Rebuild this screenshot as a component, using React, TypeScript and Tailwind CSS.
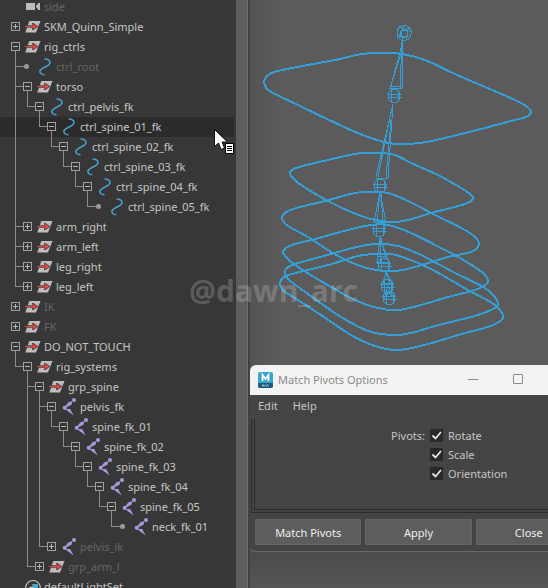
import { useState } from "react";
import type { ReactNode } from "react";

type Kind = "camera" | "group" | "curve" | "joint" | "set";

interface TreeNode {
  name: string;
  kind: Kind;
  muted?: boolean;
  selected?: boolean;
  closed?: boolean;
  children?: TreeNode[];
}

const chain = (kind: Kind, names: string[], selected?: string): TreeNode => ({
  name: names[0],
  kind,
  selected: names[0] === selected,
  children: names.length > 1 ? [chain(kind, names.slice(1), selected)] : undefined,
});

const scene: TreeNode[] = [
  { name: "side", kind: "camera", muted: true },
  { name: "SKM_Quinn_Simple", kind: "group", closed: true },
  {
    name: "rig_ctrls",
    kind: "group",
    children: [
      { name: "ctrl_root", kind: "curve", muted: true },
      {
        name: "torso",
        kind: "group",
        children: [
          chain(
            "curve",
            ["ctrl_pelvis_fk", "ctrl_spine_01_fk", "ctrl_spine_02_fk", "ctrl_spine_03_fk", "ctrl_spine_04_fk", "ctrl_spine_05_fk"],
            "ctrl_spine_01_fk",
          ),
        ],
      },
      { name: "arm_right", kind: "group", closed: true },
      { name: "arm_left", kind: "group", closed: true },
      { name: "leg_right", kind: "group", closed: true },
      { name: "leg_left", kind: "group", closed: true },
    ],
  },
  { name: "IK", kind: "group", muted: true, closed: true },
  { name: "FK", kind: "group", muted: true, closed: true },
  {
    name: "DO_NOT_TOUCH",
    kind: "group",
    children: [
      {
        name: "rig_systems",
        kind: "group",
        children: [
          {
            name: "grp_spine",
            kind: "group",
            children: [
              chain("joint", ["pelvis_fk", "spine_fk_01", "spine_fk_02", "spine_fk_03", "spine_fk_04", "spine_fk_05", "neck_fk_01"]),
              { name: "pelvis_ik", kind: "joint", muted: true, closed: true },
            ],
          },
          { name: "grp_arm_l", kind: "group", muted: true, closed: true },
        ],
      },
    ],
  },
  { name: "defaultLightSet", kind: "set" },
];

function NodeIcon({ kind }: { kind: Kind }) {
  return (
    <svg className="ml-[3px] size-4 shrink-0 overflow-visible" viewBox="0 0 16 16" aria-hidden="true">
      {kind === "camera" && <path d="M1 5h9v7H1zM11 8l2.500-3H15v7h-1.500L11 9z" fill="#bdbdbd" />}
      {kind === "group" && (
        <>
          <path d="M4.300 3h11.200l-4.500 11.500H.3z" fill="#bdbdbd" />
          <path d="M2 7.200h5V5l1.500 0L13.500 8.500 8.500 12H7V9.800H1z" fill="#4a4040" />
          <path d="M0 7.900h7.500V5.500L12.500 8.500 7.500 11.500V9.100H0z" fill="#dd4646" />
        </>
      )}
      {kind === "curve" && (
        <path
          d="M7.500 1C10.500 .8 13 2.300 13 4.700 12.800 8.200 4.500 9.500 3 12.800 2.300 14.800 4.300 16.600 7.500 16.800"
          fill="none"
          stroke="#4c9ecb"
          strokeWidth="1.600"
        />
      )}
      {kind === "joint" && (
        <g fill="#ab98dc">
          <circle cx="13" cy="2" r="2" />
          <circle cx="3.800" cy="9.800" r="2.100" />
          <path d="M4.300 8 7.500 4.200 11.500 3 10.500 6.700 6 9zM4.500 11.500 9 10.700 12.600 17.500z" />
        </g>
      )}
      {kind === "set" && (
        <>
          <circle cx="8" cy="9.800" r="7.300" fill="#373737" stroke="#c4c4c4" strokeWidth="1.200" />
          <path d="M7 6h6v7H9z" fill="#45aac6" />
          <circle cx="6.500" cy="11.500" r="3" fill="#c4c4c4" />
        </>
      )}
    </svg>
  );
}

function Guide({ elbow, more }: { elbow: boolean; more: boolean }) {
  return (
    <span className="flex h-5 w-3 shrink-0 flex-col pl-[5px]">
      <span className={`h-[10px] w-2 shrink-0 border-[#8c8c8c] ${elbow ? "border-b" : ""} ${elbow || more ? "border-l" : ""}`} />
      <span className={`h-[10px] w-2 shrink-0 border-[#8c8c8c] ${more ? "border-l" : ""}`} />
    </span>
  );
}

function TreeItem({ node, guides, last }: { node: TreeNode; guides: boolean[]; last: boolean }) {
  const [open, setOpen] = useState(!node.closed);
  const root = guides.length === 0;
  const branch = node.closed || !!node.children;
  const ancestors = guides.slice(1);
  const childGuides = [...guides, !last];
  return (
    <li>
      <div className={`flex h-5 items-start pl-[10px] ${node.selected ? "bg-[#2b2b2b]" : ""}`}>
        {ancestors.map((more, i) => (
          <Guide key={i} elbow={false} more={more} />
        ))}
        {!root && <Guide elbow more={!last} />}
        <span className="flex h-5 w-3 shrink-0 flex-col">
          {branch ? (
            <>
              <button
                type="button"
                aria-label={`${open ? "Collapse" : "Expand"} ${node.name}`}
                onClick={() => setOpen(!open)}
                className="mt-[5px] ml-px grid size-[9px] shrink-0 place-items-center border border-[#a0a0a0]"
              >
                <span className="col-start-1 row-start-1 h-px w-[5px] bg-[#b4b4b4]" />
                {(!open || !node.children) && <span className="col-start-1 row-start-1 h-[5px] w-px bg-[#b4b4b4]" />}
              </button>
              {open && node.children && <span className="ml-[5px] h-[6px] w-px bg-[#8c8c8c]" />}
            </>
          ) : (
            !root && (
              <span className="flex h-[19px] items-center">
                <span className="h-px w-[2px] bg-[#8c8c8c]" />
                <span className="size-[5px] rounded-full bg-[#9a9a9a]" />
              </span>
            )
          )}
        </span>
        <span className="flex h-[18px] items-center gap-[3px]">
          <NodeIcon kind={node.kind} />
          <span className={node.muted ? "text-[#666666]" : "text-[#c6c6c6]"}>{node.name}</span>
        </span>
      </div>
      {open && node.children && (
        <ul>
          {node.children.map((child, i) => (
            <TreeItem key={child.name} node={child} guides={childGuides} last={i === node.children!.length - 1} />
          ))}
        </ul>
      )}
    </li>
  );
}

type Point = [number, number];

const rings: Point[][] = [
  [[264, 82], [267, 76], [274, 72], [308, 65], [340, 59], [362, 54], [383, 53], [402, 54], [425, 60], [455, 74], [485, 87], [515, 100], [526, 106], [531, 112], [526, 117], [515, 120], [481, 129], [445, 138], [420, 143], [398, 144], [384, 142], [360, 134], [327, 119], [300, 106], [275, 94], [267, 89]],
  [[290, 174], [292, 170], [299, 167], [328, 160], [361, 153], [381, 153], [395, 155], [411, 163], [438, 175], [461, 188], [470, 194], [473, 199], [465, 204], [431, 213], [408, 220], [391, 222], [371, 219], [351, 212], [326, 200], [298, 183], [293, 178]],
  [[282, 217], [285, 213], [293, 209], [325, 201], [355, 193], [371, 192], [388, 193], [408, 201], [435, 215], [465, 230], [476, 238], [479, 244], [475, 250], [467, 253], [448, 257], [415, 267], [395, 271], [371, 269], [348, 261], [328, 250], [308, 237], [288, 226], [283, 221]],
  [[283, 252], [286, 248], [292, 245], [315, 239], [348, 230], [371, 225], [388, 225], [411, 233], [441, 248], [460, 258], [483, 273], [488, 281], [484, 286], [475, 290], [448, 297], [421, 305], [398, 310], [378, 308], [355, 300], [331, 287], [298, 267], [287, 258]],
  [[285, 272], [287, 268], [295, 264], [331, 254], [361, 246], [381, 244], [398, 246], [421, 255], [455, 273], [485, 288], [495, 297], [498, 304], [495, 308], [478, 315], [435, 326], [411, 333], [395, 335], [371, 332], [341, 317], [308, 294], [290, 281], [286, 277]],
  [[280, 284], [283, 278], [292, 274], [328, 265], [358, 256], [375, 254], [391, 254], [408, 259], [431, 269], [468, 290], [495, 305], [502, 313], [503, 318], [499, 322], [488, 327], [465, 333], [428, 344], [398, 350], [375, 346], [351, 335], [321, 315], [290, 295], [283, 290]],
];

/* Closed spline: each control handle is a third of its own segment, so tight corners stay round. */
function ringPath(pts: Point[]) {
  const n = pts.length;
  const at = (i: number) => pts[(i + n) % n];
  const dist = (p: Point, q: Point) => Math.hypot(q[0] - p[0], q[1] - p[1]);
  let d = `M${pts[0][0]} ${pts[0][1]}`;
  for (let i = 0; i < n; i++) {
    const [a, b, c, e] = [at(i - 1), at(i), at(i + 1), at(i + 2)];
    const k = dist(b, c) / 3;
    const u = k / dist(a, c);
    const v = k / dist(b, e);
    const handles = [b[0] + (c[0] - a[0]) * u, b[1] + (c[1] - a[1]) * u, c[0] - (e[0] - b[0]) * v, c[1] - (e[1] - b[1]) * v];
    d += `C${handles.map((h) => h.toFixed(1)).join(" ")} ${c[0]} ${c[1]}`;
  }
  return d + "Z";
}

const joints: Point[] = [[394, 96], [380, 186], [379, 230], [384, 265], [387, 286], [389, 298]];

const bones = [
  "M403 41 391 86M402 42 400 89M403 41 402 89M401 54 390 88H402M391 86H402",
  "M393 104 376 177M393 104 388 178M391 112 378 177M391 120 386 178M376 178H388",
  "M380 192 374 222H386L380 192M380 194 377 222M381 194 383 222",
  "M380 238 377 262H389L380 238M380 238 380 262M381 238 386 260M377 256H387",
  "M386 272 383 283H393L386 272M386 273 390 283",
  "M388 286 384 299H394L388 286M385 290 393 296M393 290 385 296",
];

function Viewport() {
  return (
    <svg className="block h-[365px] w-[298px] shrink-0" viewBox="250 0 298 365" role="img" aria-label="Rig viewport">
      <g fill="none" stroke="#349fd6" shapeRendering="crispEdges">
        {rings.map((r, i) => (
          <path key={i} d={ringPath(r)} strokeWidth="2" />
        ))}
        {bones.map((d) => (
          <path key={d} d={d} />
        ))}
        <path d="M399 27 405 25 410 28 412 32 409 39 403 41 398 38 397 32zM399 27 412 32M405 25 399 36H409M410 28 401 31 403 41" />
        <circle cx="404" cy="34" r="4" />
        {joints.map(([x, y]) => (
          <g key={y}>
            <ellipse cx={x} cy={y} rx="6" ry="7" />
            <path d={`M${x - 3} ${y - 6}V${y + 6}M${x + 4} ${y - 6}V${y + 6}M${x - 7} ${y - 2}H${x + 7}M${x - 6} ${y + 1}H${x + 8}`} />
          </g>
        ))}
      </g>
    </svg>
  );
}

function PivotOption({ label }: { label: string }) {
  return (
    <label className="flex h-[19px] items-center gap-[5px]">
      <span className="grid size-[13px]">
        <input
          type="checkbox"
          defaultChecked
          className="peer col-start-1 row-start-1 size-[13px] appearance-none rounded-[1px] bg-[#292929]"
        />
        <svg
          className="pointer-events-none invisible col-start-1 row-start-1 size-[13px] peer-checked:visible"
          viewBox="0 0 13 13"
          aria-hidden="true"
        >
          <path d="M2.500 6.500 5.500 9.500 11 3" fill="none" stroke="#e6e6e6" strokeWidth="1.800" />
        </svg>
      </span>
      {label}
    </label>
  );
}

function ActionButton({ children }: { children: ReactNode }) {
  return (
    <button type="button" className="h-[26px] flex-1 rounded-[1px] border border-[#646464] bg-[#5d5d5d] text-[#eeeeee]">
      {children}
    </button>
  );
}

function PivotDialog() {
  return (
    <section className="w-[337px] shrink-0 overflow-hidden rounded-md border-b border-[#686868] bg-[#444444] text-[#c6c6c6]">
      <header className="flex h-[30px] items-center bg-[#f3f3f3] text-[#8a8a8a]">
        <svg className="mr-[5px] ml-2 h-4 w-[15px]" viewBox="0 0 15 16" aria-hidden="true">
          <rect width="15" height="16" rx="2" fill="#39a5cc" />
          <path d="M0 11h15v3a2 2 0 0 1-2 2H2a2 2 0 0 1-2-2z" fill="#1c5c78" />
          <path d="M4.500 9V3L7.500 7 10.500 3V9" fill="none" stroke="#fff" strokeWidth="1.800" />
          <path d="M4 14.500l1-2 1 2M7 12.500v2M8.500 14.500l1-2 1 2" fill="none" stroke="#b9dce8" strokeWidth=".8" />
        </svg>
        <h2 className="flex-1 pb-[2px]">Match Pivots Options</h2>
        <div className="flex h-full pr-[2px] pb-[2px]">
          <button type="button" aria-label="Minimize" className="grid w-[45px] place-items-center">
            <span className="h-px w-[10px] bg-[#8a8a8a]" />
          </button>
          <button type="button" aria-label="Maximize" className="grid w-[45px] place-items-center">
            <span className="size-[10px] rounded-[1px] border border-[#8a8a8a]" />
          </button>
          <button type="button" aria-label="Close window" className="grid w-[45px] place-items-center">
            <svg className="size-[10px]" viewBox="0 0 10 10" aria-hidden="true">
              <path d="M0 0 10 10M10 0 0 10" stroke="#8a8a8a" />
            </svg>
          </button>
        </div>
      </header>
      <nav className="flex h-6 items-center gap-[15px] px-2 pb-[3px]">
        <button type="button">Edit</button>
        <button type="button">Help</button>
      </nav>
      <div className="ml-px border-b border-l border-[#2b2b2b] pb-[2px] pl-[2px]">
        <div className="flex h-[91px] border-b border-l border-[#2b2b2b] pt-[7px]">
          <span className="flex h-[19px] w-[175px] justify-end pr-[5px]">Pivots:</span>
          <div>
            <PivotOption label="Rotate" />
            <PivotOption label="Scale" />
            <PivotOption label="Orientation" />
          </div>
        </div>
      </div>
      <div className="flex gap-1 px-[5px] pt-[6px] pb-[6px]">
        <ActionButton>Match Pivots</ActionButton>
        <ActionButton>Apply</ActionButton>
        <ActionButton>Close</ActionButton>
      </div>
    </section>
  );
}

export default function App() {
  return (
    <main className="relative flex h-screen w-full overflow-hidden bg-[#373737] font-['Noto_Sans','Open_Sans',sans-serif] text-[11px] leading-[19px]">
      <div className="flex w-[250px] shrink-0 overflow-hidden border-r-2 border-[#414141]">
        <ul className="-mt-[3px] w-[234px]">
          {scene.map((node, i) => (
            <TreeItem key={node.name} node={node} guides={[]} last={i === scene.length - 1} />
          ))}
        </ul>
        <div className="ml-[2px] flex-1 border-r border-[#6e6e6e] bg-[#5d5d5d]" />
      </div>
      <div className="flex min-w-0 flex-1 flex-col overflow-hidden bg-linear-to-r from-[#545454] to-[#5b5b5b] to-10%">
        <Viewport />
        <PivotDialog />
        <div className="flex-1 bg-linear-to-b from-[#4b4b4b] to-[#555555]" />
      </div>

      <p className="pointer-events-none absolute top-[271px] left-[189px] font-['Open_Sans','Noto_Sans',sans-serif] text-[30px] leading-10 font-bold text-white/20">
        @dawn_arc
      </p>
      <svg className="pointer-events-none absolute top-[128px] left-[213px] h-[27px] w-[23px]" viewBox="0 0 23 27" aria-hidden="true">
        <path d="M1.500 1.500v17l4-3.500 2.500 6.500 3.500-1.500-2.500-6h5.500z" fill="#fff" stroke="#111" />
        <path d="M12.500 15.500h8v10h-8z" fill="#fff" stroke="#000" />
        <path d="M14 18.500h5M14 20.500h5M14 22.500h5" stroke="#000" />
      </svg>
    </main>
  );
}
